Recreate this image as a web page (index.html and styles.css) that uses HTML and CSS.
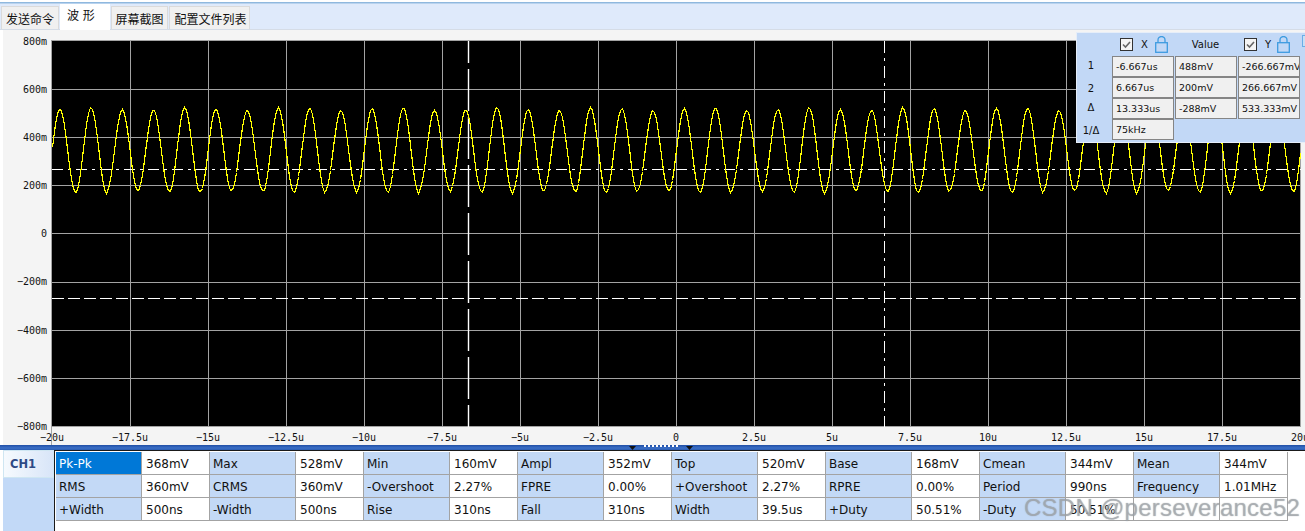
FILE: index.html
```html
<!DOCTYPE html>
<html lang="zh">
<head>
<meta charset="utf-8">
<title>波形</title>
<link rel="stylesheet" href="styles.css">
</head>
<body>
<div class="app">
  <div class="topline"></div>
  <nav class="tabs">
    <div class="tab tab-send">发送命令</div>
    <div class="tab tab-active">波 形</div>
    <div class="tab tab-shot">屏幕截图</div>
    <div class="tab tab-config">配置文件列表</div>
  </nav>

  <main class="scope">
    <div class="scope-inner">
      <div class="ylabels">
        <span>800m</span><span>600m</span><span>400m</span><span>200m</span><span>0</span><span>−200m</span><span>−400m</span><span>−600m</span><span>−800m</span>
      </div>
      <div class="plot-col">
        <svg class="plot" width="1249" height="386" viewBox="0 0 1249 386">
          <rect width="1249" height="386" fill="#000"/>
          <path class="grid" d="M78.5 0V386M156.5 0V386M234.5 0V386M312.5 0V386M390.5 0V386M468.5 0V386M546.5 0V386M624.5 0V386M702.5 0V386M780.5 0V386M858.5 0V386M936.5 0V386M1014.5 0V386M1092.5 0V386M1170.5 0V386M1248.5 0V386M0 48.5H1249M0 96.5H1249M0 144.5H1249M0 192.5H1249M0 241.5H1249M0 289.5H1249M0 337.5H1249M0 385.5H1249"/>
          <path class="cursor cursor-dashdot" d="M0 128.5H1249"/>
          <path class="cursor cursor-dash" d="M0 257.5H1249"/>
          <path class="cursor cursor-v1" d="M416.5 0V386"/>
          <path class="cursor cursor-v2" d="M832.5 0V386"/>
          <polyline id="wave" class="wave" points=""/>
        </svg>
        <div class="xlabels">
          <span>−20u</span><span>−17.5u</span><span>−15u</span><span>−12.5u</span><span>−10u</span><span>−7.5u</span><span>−5u</span><span>−2.5u</span><span>0</span><span>2.5u</span><span>5u</span><span>7.5u</span><span>10u</span><span>12.5u</span><span>15u</span><span>17.5u</span><span>20u</span>
        </div>
      </div>
    </div>

    <aside class="cursors-panel">
      <div></div>
      <div class="ph ph-x">
        <svg class="check" width="13" height="13" viewBox="0 0 13 13"><rect x=".5" y=".5" width="12" height="12" fill="#f4f4f4" stroke="#333"/><path d="M3 6.500l2.500 2.500 4.500-5" fill="none" stroke="#666" stroke-width="1.600"/></svg>
        <span class="ph-name">X</span>
        <svg class="lock" width="13" height="17" viewBox="0 0 13 17"><path d="M3 6.500V4a3.500 3.500 0 0 1 7 0V6.500" fill="none" stroke="#3d9be0" stroke-width="1.300"/><rect x=".7" y="6.700" width="11.600" height="9.600" fill="none" stroke="#3d9be0" stroke-width="1.300"/></svg>
      </div>
      <div class="ph ph-value">Value</div>
      <div class="ph ph-y">
        <svg class="check" width="13" height="13" viewBox="0 0 13 13"><rect x=".5" y=".5" width="12" height="12" fill="#f4f4f4" stroke="#333"/><path d="M3 6.500l2.500 2.500 4.500-5" fill="none" stroke="#666" stroke-width="1.600"/></svg>
        <span class="ph-name">Y</span>
        <svg class="lock" width="13" height="17" viewBox="0 0 13 17"><path d="M3 6.500V4a3.500 3.500 0 0 1 7 0V6.500" fill="none" stroke="#3d9be0" stroke-width="1.300"/><rect x=".7" y="6.700" width="11.600" height="9.600" fill="none" stroke="#3d9be0" stroke-width="1.300"/></svg>
      </div>
      <div class="ph ph-extra"><span class="extra-box"></span></div>

      <div class="rl">1</div><div class="rc">-6.667us</div><div class="rc">488mV</div><div class="rc">-266.667mV</div><div></div>
      <div class="rl rl-low">2</div><div class="rc">6.667us</div><div class="rc">200mV</div><div class="rc">266.667mV</div><div></div>
      <div class="rl">Δ</div><div class="rc">13.333us</div><div class="rc">-288mV</div><div class="rc">533.333mV</div><div></div>
      <div class="rl rl-low">1/Δ</div><div class="rc">75kHz</div>
    </aside>
  </main>

  <div class="splitter">
    <svg width="80" height="5" viewBox="0 0 80 5">
      <path d="M7 1h7l-3.500 4zM64 1h7l-3.500 4z" fill="#111"/>
      <path class="dots" d="M22 1h2M26 1h2M30 1h2M34 1h2M38 1h2M42 1h2M46 1h2M50 1h2M54 1h2"/>
    </svg>
  </div>

  <section class="bottom">
    <div class="channels">
      <div class="ch-tab">CH1</div>
    </div>
    <div class="measure-wrap">
      <table class="measure">
        <colgroup>
          <col class="cl"><col class="cv"><col class="cl"><col class="cv"><col class="cl"><col class="cv"><col class="cl"><col class="cv"><col class="cl"><col class="cv"><col class="cl"><col class="cv"><col class="cl"><col class="cv"><col class="cl"><col class="cv">
        </colgroup>
        <tr>
          <td class="k sel">Pk-Pk</td><td>368mV</td><td class="k">Max</td><td>528mV</td><td class="k">Min</td><td>160mV</td><td class="k">Ampl</td><td>352mV</td><td class="k">Top</td><td>520mV</td><td class="k">Base</td><td>168mV</td><td class="k">Cmean</td><td>344mV</td><td class="k">Mean</td><td>344mV</td>
        </tr>
        <tr>
          <td class="k">RMS</td><td>360mV</td><td class="k">CRMS</td><td>360mV</td><td class="k">-Overshoot</td><td>2.27%</td><td class="k">FPRE</td><td>0.00%</td><td class="k">+Overshoot</td><td>2.27%</td><td class="k">RPRE</td><td>0.00%</td><td class="k">Period</td><td>990ns</td><td class="k">Frequency</td><td>1.01MHz</td>
        </tr>
        <tr>
          <td class="k">+Width</td><td>500ns</td><td class="k">-Width</td><td>500ns</td><td class="k">Rise</td><td>310ns</td><td class="k">Fall</td><td>310ns</td><td class="k">Width</td><td>39.5us</td><td class="k">+Duty</td><td>50.51%</td><td class="k">-Duty</td><td>50.51%</td><td></td><td></td>
        </tr>
      </table>
    </div>
    <div class="watermark">CSDN @perseverance52</div>
  </section>
</div>
<script src="app.js"></script>
</body>
</html>
```

FILE: styles.css
```css
* { box-sizing: border-box; }
html, body { margin: 0; padding: 0; height: 100%; overflow: hidden; background: #fff; }
body { font-family: "DejaVu Sans", sans-serif; color: #111; }

.app { width: 1305px; height: 531px; display: flex; flex-direction: column; position: relative; overflow: hidden; }

.topline { height: 4px; flex: none; background: linear-gradient(#ffffff 0 2px, #8fb8de 2px 3px, #b9d3ee 3px); }

.tabs {
  height: 26px; flex: none; display: flex; align-items: flex-end; padding-left: 1px;
  background: #dfeafb; border-bottom: 1px solid #d5dce6;
  font-family: "Noto Sans CJK SC", sans-serif; font-size: 12px; line-height: 23px;
}
.tab { height: 23px; background: #f0f0f0; border: 1px solid #dadada; border-bottom: 0; text-align: center; margin-right: 1px; }
.tab-send { width: 58px; }
.tab-shot { width: 57px; }
.tab-config { width: 81px; padding-left: 2px; }
.tab-active {
  width: 50px; height: 26px; margin-bottom: -1px; padding-left: 7px; background: #fff; border: 0;
  line-height: 22px; text-align: left; word-spacing: 1px; position: relative;
}

.scope { height: 415px; flex: none; padding-left: 3px; position: relative; }
.scope-inner { height: 100%; background: #f4f4f4; display: flex; padding-top: 10px; }

.ylabels {
  width: 48px; flex: none; height: 432px; margin-top: -22px; display: flex; flex-direction: column;
  font-family: "DejaVu Sans Mono", monospace; font-size: 10px;
}
.ylabels span { height: 48.1px; flex: none; line-height: 48.1px; text-align: right; padding-right: 4px; }

.plot-col { width: 1250px; flex: none; border-top: 1px solid #a3a3a3; border-left: 1px solid #a3a3a3; align-self: flex-start; }
.plot { display: block; width: 1249px; height: 386px; }
.grid { stroke: #a3a3a3; stroke-width: 1; fill: none; shape-rendering: crispEdges; }
.cursor { stroke: #fff; fill: none; shape-rendering: crispEdges; }
.cursor-dashdot { stroke-dasharray: 11 5 3 5; }
.cursor-dash { stroke-dasharray: 12 4; }
.cursor-v1 { stroke-width: 1.4; stroke-dasharray: 42 6; stroke-dashoffset: 20; shape-rendering: auto; }
.cursor-v2 { stroke-dasharray: 12 5 3 5; }
.wave { fill: none; stroke: #ffff00; stroke-width: 1.2; stroke-linejoin: miter; shape-rendering: crispEdges; }

.xlabels {
  display: flex; margin-left: -39px; height: 18px; white-space: nowrap;
  font-family: "DejaVu Sans Mono", monospace; font-size: 10px; line-height: 21px;
}
.xlabels span { flex: none; width: 78px; text-align: center; }

.cursors-panel {
  position: absolute; left: 1076px; top: 2px; width: 240px; height: 111px;
  background: #c2d8f6; border: 1px solid #e6eef9; border-right: 0;
  display: grid; grid-template-columns: 35px 63px 63px 63px 16px; grid-template-rows: 23px 21px 21px 21px 21px;
  font-size: 10px; line-height: 1;
}
.ph { display: flex; align-items: center; }
.ph-x { padding-left: 8px; }
.ph-y { padding-left: 6px; }
.ph-name { width: 22px; padding-left: 8px; font-size: 10px; }
.ph-y .ph-name { width: 20px; padding-left: 8px; }
.ph-value { justify-content: center; font-size: 10px; padding-right: 2px; }
.ph-extra { align-items: flex-start; padding-top: 2px; padding-left: 1px; }
.extra-box { width: 12px; height: 12px; border: 1px solid #6aaee6; background: #c9dff5; }
.lock { margin-top: -1px; flex: none; }
.check { flex: none; }
.rl { display: flex; align-items: center; justify-content: center; padding-right: 7px; padding-bottom: 2px; font-size: 10px; }
.rl-low { padding-bottom: 0; padding-top: 3px; }
.rc {
  width: 62px; height: 21px; background: #f0f0f0; border: 1px solid #858585;
  padding-left: 3px; font-size: 9.5px; line-height: 19px; white-space: nowrap; overflow: hidden;
}

.splitter {
  height: 5px; flex: none; display: flex; justify-content: center; padding-left: 18px;
  background: linear-gradient(#1f4ea5, #3b6fc6 60%, #2a5bb0);
}
.splitter svg { display: block; }
.dots { stroke: #fff; stroke-width: 2; fill: none; shape-rendering: crispEdges; }

.bottom { height: 81px; flex: none; display: flex; padding-left: 3px; position: relative; }
.channels { width: 52px; flex: none; background: #c2d9f7; border-right: 1px solid #1a1a1a; }
.ch-tab {
  width: 51px; height: 28px; padding-left: 6px;
  background: linear-gradient(90deg, #f6fafe, #d8e5f8); border: 1px solid #cfe6f2;
  font-family: "DejaVu Sans", sans-serif; font-weight: 700; font-size: 11.5px; line-height: 26px; color: #2d4a85;
}
.measure-wrap { flex: 1; border-top: 1px solid #1a1a1a; padding: 1px 0 0 1px; }
.measure { border-collapse: separate; border-spacing: 0; table-layout: fixed; width: 1232px; font-size: 12px; }
.cl { width: 86px; }
.cv { width: 68px; }
.measure td {
  height: 23px; padding: 1px 0 0 4px; border-right: 1px solid #a3a3a3; border-bottom: 1px solid #a3a3a3;
  white-space: nowrap; overflow: hidden; background: #fff; line-height: 20px;
}
.measure td.k { background: #c3d9f6; padding-left: 3px; }
.measure td.sel { background: #0078d7; color: #fff; }

.watermark {
  position: absolute; left: 1024px; top: 44px;
  font-family: "Liberation Sans", sans-serif; font-size: 24px; line-height: 28px; letter-spacing: .25px;
  color: rgba(170, 175, 180, .6); text-shadow: 0 0 1px rgba(120, 125, 130, .7);
  white-space: nowrap; pointer-events: none;
}
```

FILE: app.js
```js
// Draws the sampled CH1 trace: 1.01 MHz sine, stepped to whole pixels as the scope does.
(function () {
  var wave = document.getElementById('wave');
  var points = [];
  var period = 31.22;
  var firstPeak = 7.4;
  for (var x = 0; x <= 1248; x += 2) {
    var turn = (x - firstPeak) / period;
    var n = Math.round(turn);
    var amp = 41.5 + 1.5 * Math.sin(n * 1.9);
    var y = 109 - amp * Math.cos(turn * 2 * Math.PI);
    points.push((x + 0.5) + ',' + (Math.round(y) + 0.5));
  }
  wave.setAttribute('points', points.join(' '));
})();
```
